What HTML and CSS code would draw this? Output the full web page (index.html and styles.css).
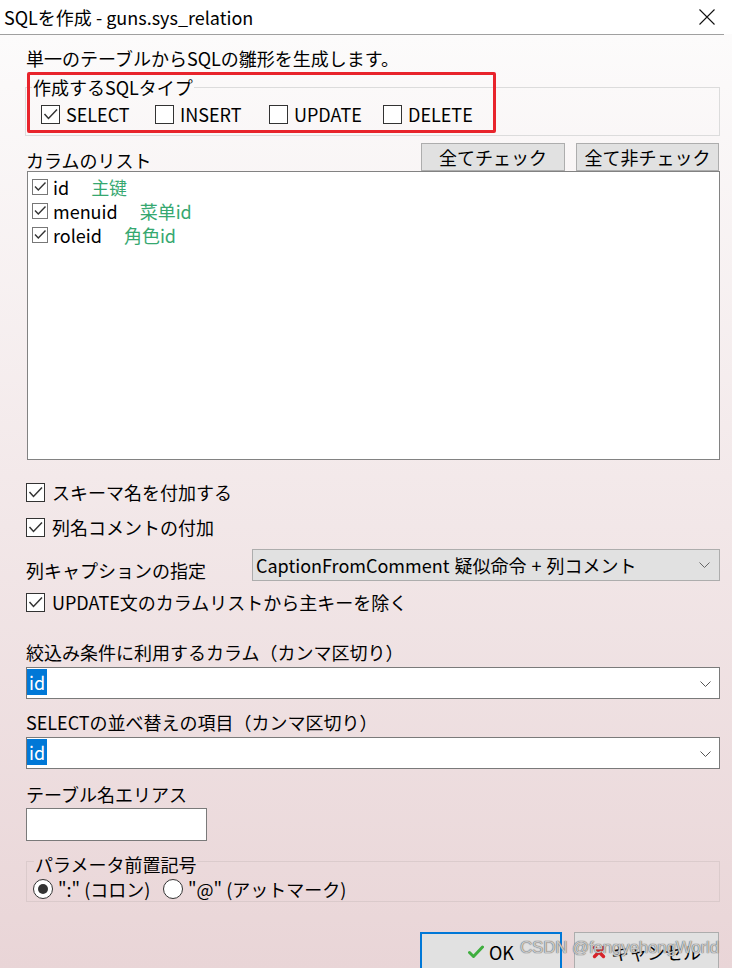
FILE: index.html
```html
<!DOCTYPE html>
<html lang="ja">
<head>
<meta charset="utf-8">
<title>SQLを作成</title>
<link rel="stylesheet" href="styles.css">
</head>
<body>
<div class="window">
  <header class="titlebar">
    <span class="title">SQLを作成 - guns.sys_relation</span>
    <svg class="close" viewBox="0 0 16 16"><path d="M0.5 0.5 L15.5 15.5 M15.5 0.5 L0.5 15.5" stroke="#111" stroke-width="1.1" fill="none"/></svg>
  </header>
  <div class="sep"></div>
  <main class="content">
    <p class="desc">単一のテーブルからSQLの雛形を生成します。</p>

    <fieldset class="group types">
      <legend>作成するSQLタイプ</legend>
      <div class="type-row">
        <label class="opt"><svg class="cb" viewBox="0 0 19 19"><rect x="0.5" y="0.5" width="18" height="18" fill="#fff" stroke="#333"/><path d="M3.5 9 L7.5 13.5 L16 4.5" fill="none" stroke="#333" stroke-width="1.5"/></svg><span>SELECT</span></label>
        <label class="opt"><svg class="cb" viewBox="0 0 19 19"><rect x="0.5" y="0.5" width="18" height="18" fill="#fff" stroke="#333"/></svg><span>INSERT</span></label>
        <label class="opt"><svg class="cb" viewBox="0 0 19 19"><rect x="0.5" y="0.5" width="18" height="18" fill="#fff" stroke="#333"/></svg><span>UPDATE</span></label>
        <label class="opt"><svg class="cb" viewBox="0 0 19 19"><rect x="0.5" y="0.5" width="18" height="18" fill="#fff" stroke="#333"/></svg><span>DELETE</span></label>
      </div>
    </fieldset>
    <div class="annot"></div>

    <div class="list-head">
      <span class="head-label">カラムのリスト</span>
      <div class="head-buttons">
        <button class="btn btn-all">全てチェック</button>
        <button class="btn btn-none">全て非チェック</button>
      </div>
    </div>
    <div class="listbox">
      <div class="item"><svg class="cb-s" viewBox="0 0 16 16"><rect x="0.5" y="0.5" width="15" height="15" fill="#fff" stroke="#777"/><path d="M3 7.5 L6.3 11 L13.5 3.5" fill="none" stroke="#333" stroke-width="1.4"/></svg><span class="name">id</span><span class="comment">主键</span></div>
      <div class="item"><svg class="cb-s" viewBox="0 0 16 16"><rect x="0.5" y="0.5" width="15" height="15" fill="#fff" stroke="#777"/><path d="M3 7.5 L6.3 11 L13.5 3.5" fill="none" stroke="#333" stroke-width="1.4"/></svg><span class="name">menuid</span><span class="comment">菜单id</span></div>
      <div class="item"><svg class="cb-s" viewBox="0 0 16 16"><rect x="0.5" y="0.5" width="15" height="15" fill="#fff" stroke="#777"/><path d="M3 7.5 L6.3 11 L13.5 3.5" fill="none" stroke="#333" stroke-width="1.4"/></svg><span class="name">roleid</span><span class="comment">角色id</span></div>
    </div>

    <label class="check-line cl1"><svg class="cb" viewBox="0 0 19 19"><rect x="0.5" y="0.5" width="18" height="18" fill="#fff" stroke="#333"/><path d="M3.5 9 L7.5 13.5 L16 4.5" fill="none" stroke="#333" stroke-width="1.5"/></svg><span>スキーマ名を付加する</span></label>
    <label class="check-line cl2"><svg class="cb" viewBox="0 0 19 19"><rect x="0.5" y="0.5" width="18" height="18" fill="#fff" stroke="#333"/><path d="M3.5 9 L7.5 13.5 L16 4.5" fill="none" stroke="#333" stroke-width="1.5"/></svg><span>列名コメントの付加</span></label>

    <div class="caption-row">
      <span class="caption-label">列キャプションの指定</span>
      <div class="dropdown">
        <span class="dd-text">CaptionFromComment 疑似命令 + 列コメント</span>
        <svg class="chev" viewBox="0 0 11 6"><polyline points="0.5,0.5 5.5,5.5 10.5,0.5" fill="none" stroke="#666" stroke-width="1"/></svg>
      </div>
    </div>
    <label class="check-line cl3"><svg class="cb" viewBox="0 0 19 19"><rect x="0.5" y="0.5" width="18" height="18" fill="#fff" stroke="#333"/><path d="M3.5 9 L7.5 13.5 L16 4.5" fill="none" stroke="#333" stroke-width="1.5"/></svg><span>UPDATE文のカラムリストから主キーを除く</span></label>

    <div class="field-label fl1">絞込み条件に利用するカラム（カンマ区切り）</div>
    <div class="combo">
      <span class="sel">id</span>
      <svg class="chev" viewBox="0 0 11 6"><polyline points="0.5,0.5 5.5,5.5 10.5,0.5" fill="none" stroke="#555" stroke-width="1"/></svg>
    </div>
    <div class="field-label fl2">SELECTの並べ替えの項目（カンマ区切り）</div>
    <div class="combo">
      <span class="sel">id</span>
      <svg class="chev" viewBox="0 0 11 6"><polyline points="0.5,0.5 5.5,5.5 10.5,0.5" fill="none" stroke="#555" stroke-width="1"/></svg>
    </div>
    <div class="field-label fl3">テーブル名エリアス</div>
    <div class="textbox"></div>

    <fieldset class="group params">
      <legend>パラメータ前置記号</legend>
      <div class="radio-row">
        <label class="ropt r1"><svg class="rb" viewBox="0 0 20 20"><circle cx="10" cy="10" r="9.5" fill="#fff" stroke="#333"/><circle cx="10" cy="10" r="5" fill="#333"/></svg><span>":" (コロン)</span></label>
        <label class="ropt"><svg class="rb" viewBox="0 0 20 20"><circle cx="10" cy="10" r="9.5" fill="#fff" stroke="#333"/></svg><span>"@" (アットマーク)</span></label>
      </div>
    </fieldset>

    <div class="footer">
      <button class="fbtn ok"><svg class="ico" viewBox="0 0 16 14"><path d="M1.5 7.5 L5.5 11.5 L14.5 2" fill="none" stroke="#3fae3f" stroke-width="3" stroke-linecap="round" stroke-linejoin="round"/></svg><span>OK</span></button>
      <button class="fbtn cancel"><svg class="ico" viewBox="0 0 14 14"><path d="M2.5 2.5 L11.5 11.5 M11.5 2.5 L2.5 11.5" fill="none" stroke="#d8232a" stroke-width="3.4" stroke-linecap="round"/></svg><span>キャンセル</span></button>
    </div>
  </main>
  <div class="watermark">CSDN @fengyehongWorld</div>
</div>
</body>
</html>
```
FILE: styles.css
```css
* { box-sizing: border-box; }
html, body { margin: 0; padding: 0; }
body {
  font-family: "Noto Sans CJK JP", "Noto Sans", sans-serif;
  font-size: 18px;
  color: #000;
}
.window {
  width: 732px;
  height: 968px;
  overflow: hidden;
  position: relative;
  background: linear-gradient(to bottom, #fdfcfc 0, #fcfbfb 35px, #e9d5d7 968px);
}
.titlebar {
  height: 34px;
  background: #fff;
  display: flex;
  align-items: center;
  justify-content: space-between;
  padding: 0 17px 0 4px;
}
.title { line-height: 24px; }
.close { width: 16px; height: 16px; display: block; }
.sep { height: 1px; background: #a0a0a0; margin-right: 8px; }

.content { position: relative; padding: 11px 12px 0 26px; }
.desc { margin: 0; line-height: 24px; }

.group {
  margin: 6px 0 0 -1px;
  padding: 0;
  border: 1px solid #dcdcdc;
  min-width: 0;
}
.types legend { margin-left: 6px; padding: 0 1px; line-height: 22px; }
.type-row { display: flex; padding: 6px 0 11px 15px; }
.opt { display: flex; align-items: center; gap: 6px; width: 114px; height: 20px; line-height: 20px; }
.cb { width: 19px; height: 19px; flex: none; display: block; }

.annot {
  position: absolute;
  left: 27px;
  top: 37px;
  width: 469px;
  height: 61px;
  border: 3px solid #e8242c;
  border-radius: 2px;
}

.list-head { display: flex; justify-content: space-between; align-items: flex-start; margin-top: 7px; height: 28px; }
.head-label { line-height: 24px; margin-top: 5px; }
.head-buttons { display: flex; gap: 11px; margin-right: 1px; }
.btn {
  font: inherit;
  height: 28px;
  line-height: 26px;
  padding: 0;
  background: #e1e1e1;
  border: 1px solid #adadad;
  color: #000;
}
.btn-all { width: 144px; }
.btn-none { width: 143px; }

.listbox {
  margin-left: 1px;
  height: 289px;
  background: #fff;
  border: 1px solid #828282;
  padding: 3px 4px;
}
.item { display: flex; align-items: center; height: 24px; }
.cb-s { width: 16px; height: 16px; flex: none; display: block; margin-right: 5px; }
.comment { margin-left: 22px; color: #36a870; }

.check-line { display: flex; align-items: center; gap: 7px; height: 24px; }
.cl1 { margin-top: 20px; }
.cl2 { margin-top: 11px; }
.cl3 { margin-top: 9px; }

.caption-row { display: flex; align-items: flex-start; margin-top: 10px; height: 32px; }
.caption-label { line-height: 24px; margin-top: 9px; }
.dropdown {
  margin-left: auto;
  width: 468px;
  height: 32px;
  background: #e1e1e1;
  border: 1px solid #adadad;
  display: flex;
  align-items: center;
  justify-content: space-between;
  padding: 0 9px 0 3px;
}
.dd-text { word-spacing: 1px; }
.chev { width: 11px; height: 6px; display: block; }

.field-label { line-height: 24px; }
.fl1 { margin-top: 26px; }
.fl2 { margin-top: 11px; }
.fl3 { margin-top: 13px; }
.combo {
  margin-top: 3px;
  height: 32px;
  background: #fff;
  border: 1px solid #7a7a7a;
  display: flex;
  align-items: flex-start;
  justify-content: space-between;
  padding: 1px 8px 0 0;
}
.combo .chev { margin-top: 12px; }
.sel {
  display: inline-block;
  background: #0078d7;
  color: #fff;
  line-height: 26px;
  padding: 0 2px;
}
.textbox {
  margin-top: 2px;
  width: 181px;
  height: 33px;
  background: #fff;
  border: 1px solid #7a7a7a;
}

.params { margin-top: 6px; margin-left: 0; border-color: rgba(150, 140, 140, 0.18); }
.params legend { margin-left: 7px; padding: 6px 1px 0; line-height: 22px; }
.radio-row { display: flex; padding: 4px 0 2px 6px; }
.ropt { display: flex; align-items: center; gap: 5px; height: 20px; line-height: 20px; }
.r1 { width: 130px; }
.rb { width: 20px; height: 20px; display: block; flex: none; }

.footer { display: flex; justify-content: flex-end; gap: 12px; margin-top: 30px; padding-right: 1px; }
.fbtn {
  font: inherit;
  color: #000;
  height: 40px;
  background: #e1e1e1;
  display: flex;
  align-items: flex-start;
  justify-content: center;
  gap: 5px;
  padding: 6px 0 0;
}
.fbtn span { line-height: 26px; }
.ok { width: 142px; border: 2px solid #0078d7; padding-top: 5px; }
.cancel { width: 145px; border: 1px solid #adadad; }
.ico { width: 16px; height: 14px; display: block; margin-top: 6px; }
.cancel .ico { width: 14px; }

.watermark {
  position: absolute;
  left: 520px;
  top: 937px;
  white-space: nowrap;
  font-family: "Liberation Sans", "Noto Sans", sans-serif;
  font-size: 17px;
  line-height: 22px;
  color: rgba(230, 230, 230, 0.8);
  text-shadow: 0 0 1px #555, 0 0 1px #777;
  letter-spacing: -0.2px;
}
```
